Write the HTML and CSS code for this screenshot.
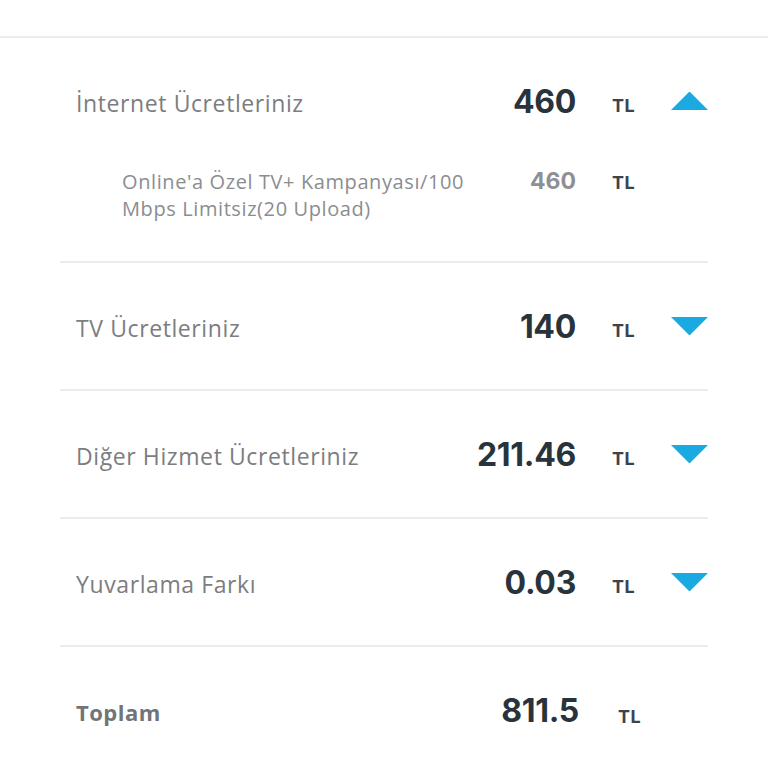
FILE: index.html
```html
<!DOCTYPE html>
<html lang="tr">
<head>
    <meta charset="UTF-8">
    <meta name="viewport" content="width=device-width, initial-scale=1.0">
    <title>Fatura Detayı</title>
    <link rel="stylesheet" href="styles.css">
</head>
<body>
    <div class="top-space"></div>
    <div class="bill">
        <div class="bill-group open">
            <div class="bill-row">
                <span class="label">İnternet Ücretleriniz</span>
                <span class="amount">460</span>
                <span class="currency">TL</span>
                <span class="toggle up"></span>
            </div>
            <div class="sub-row">
                <span class="sub-label">Online'a Özel TV+ Kampanyası/100 Mbps Limitsiz(20 Upload)</span>
                <span class="sub-amount">460</span>
                <span class="currency">TL</span>
                <span class="toggle-space"></span>
            </div>
        </div>
        <div class="bill-group">
            <div class="bill-row">
                <span class="label">TV Ücretleriniz</span>
                <span class="amount">140</span>
                <span class="currency">TL</span>
                <span class="toggle down"></span>
            </div>
        </div>
        <div class="bill-group">
            <div class="bill-row">
                <span class="label">Diğer Hizmet Ücretleriniz</span>
                <span class="amount">211.46</span>
                <span class="currency">TL</span>
                <span class="toggle down"></span>
            </div>
        </div>
        <div class="bill-group">
            <div class="bill-row">
                <span class="label">Yuvarlama Farkı</span>
                <span class="amount">0.03</span>
                <span class="currency">TL</span>
                <span class="toggle down"></span>
            </div>
        </div>
        <div class="bill-group total">
            <div class="bill-row">
                <span class="label">Toplam</span>
                <span class="amount">811.5</span>
                <span class="currency">TL</span>
                <span class="toggle-space"></span>
            </div>
        </div>
    </div>
</body>
</html>
```

FILE: styles.css
```css
* {
    margin: 0;
    padding: 0;
    box-sizing: border-box;
}

body {
    background: #ffffff;
    font-family: 'Open Sans', 'Noto Sans', sans-serif;
    color: #7b7d80;
}

.top-space {
    height: 38px;
    border-bottom: 2px solid #ececec;
}

.bill {
    padding: 0 60px;
}

.bill-group {
    border-bottom: 2px solid #ececec;
}

.bill-group.total {
    border-bottom: none;
}

.bill-row {
    height: 126px;
    display: flex;
    align-items: center;
    padding-left: 16px;
}

.label {
    flex: 1;
    padding-top: 3px;
    font-size: 23px;
    letter-spacing: 0.6px;
    color: #7b7d80;
}

.amount {
    font-family: 'Inter', 'Open Sans', sans-serif;
    font-size: 32px;
    font-weight: 700;
    letter-spacing: -0.3px;
    color: #29333b;
    text-align: right;
}

.currency {
    width: 95px;
    padding-left: 36px;
    padding-top: 8px;
    font-family: 'Inter', 'Open Sans', sans-serif;
    font-size: 18px;
    font-weight: 700;
    letter-spacing: 0.5px;
    color: #3c444b;
}

.toggle,
.toggle-space {
    width: 37px;
    height: 18px;
}

.toggle.up {
    border-left: 18.5px solid transparent;
    border-right: 18.5px solid transparent;
    border-bottom: 18px solid #1ba9e1;
}

.toggle.down {
    border-left: 18.5px solid transparent;
    border-right: 18.5px solid transparent;
    border-top: 18px solid #1ba9e1;
}

.sub-row {
    display: flex;
    align-items: flex-start;
    padding: 4px 0 39px 62px;
}

.sub-label {
    flex: 1;
    max-width: 372px;
    font-size: 20px;
    line-height: 27px;
    letter-spacing: 0.6px;
    color: #8b8d90;
}

.sub-amount {
    margin-left: auto;
    font-family: 'Inter', 'Open Sans', sans-serif;
    font-size: 23px;
    line-height: 27px;
    font-weight: 700;
    color: #8e9093;
    text-align: right;
}

.sub-row .currency {
    padding-top: 4px;
}

.total .label {
    font-weight: 700;
    font-size: 22px;
    letter-spacing: 0.5px;
    color: #717478;
}

.total .amount {
    margin-right: -3px;
}

.total .currency {
    padding-left: 42px;
    padding-top: 12px;
}
```
